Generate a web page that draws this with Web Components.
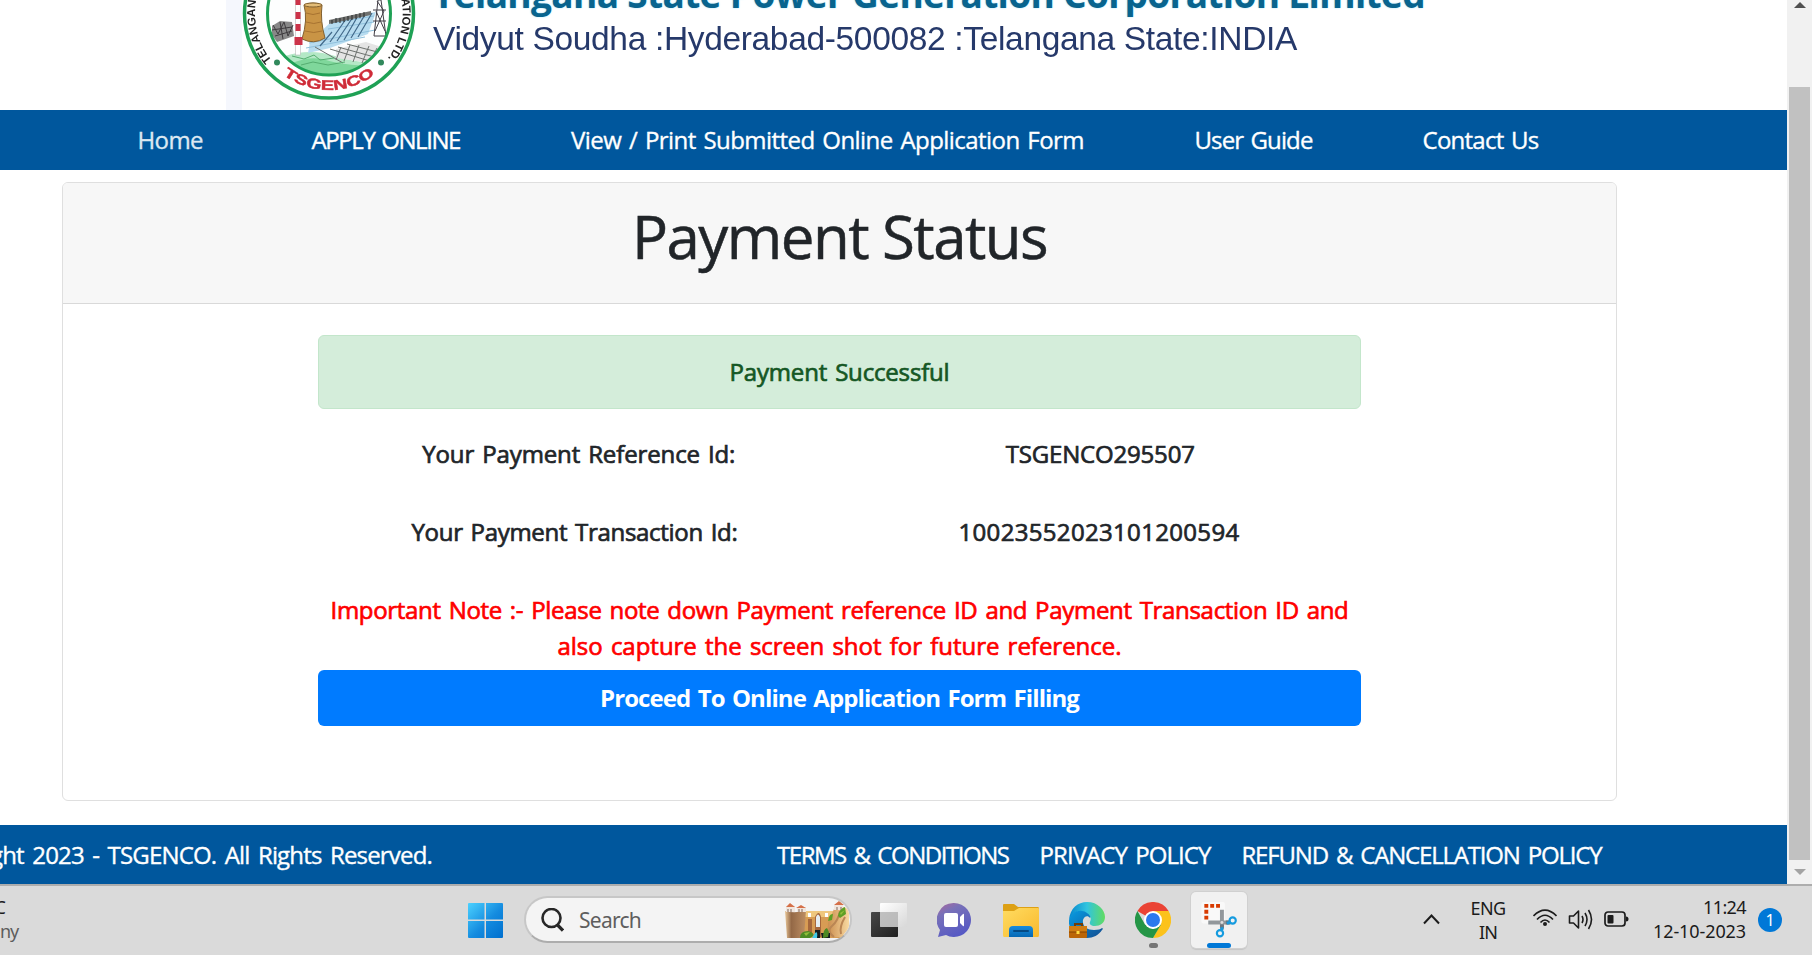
<!DOCTYPE html>
<html lang="en">
<head>
<meta charset="utf-8">
<title>Payment Status</title>
<style>
html,body{margin:0;height:955px;overflow:hidden;background:#fff}
body{font:24px/36px "Open Sans","Noto Sans",sans-serif;color:#212529}
</style>
</head>
<body>
<desk-screen>
  <site-page>
    <site-header></site-header>
    <site-nav></site-nav>
    <status-card></status-card>
    <site-footer></site-footer>
  </site-page>
  <page-scrollbar></page-scrollbar>
  <task-bar slot="bar"></task-bar>
</desk-screen>
<script>
const define=(name,html,after)=>customElements.define(name,class extends HTMLElement{
  constructor(){super();this.attachShadow({mode:'open'}).innerHTML=html;}
  connectedCallback(){if(after)after(this);}
});

/* One line of text tracked to a given width. */
define('fit-text',`<style>:host{display:block;white-space:nowrap;flex:none}span{display:inline-block;white-space:nowrap}</style><span><slot></slot></span>`,el=>{
  const w=+el.getAttribute('width'),s=el.shadowRoot.querySelector('span'),n=el.textContent.length;
  el.style.width=w+'px';
  const nat=s.getBoundingClientRect().width;
  s.style.letterSpacing=((w-nat)/n)+'px';
});

define('desk-screen',`<style>
:host{display:grid;grid-template-rows:884px 71px;width:1812px;height:955px;overflow:hidden}
.view{display:grid;grid-template-columns:1787px 25px;min-height:0}
</style><div class="view"><slot></slot></div><slot name="bar"></slot>`);

define('site-page',`<style>:host{display:flex;flex-direction:column;height:884px;overflow:hidden}</style><slot></slot>`);

define('tsgenco-seal',`<style>:host{display:block;width:180px;height:110px}svg{display:block;filter:blur(.35px)}</style>
<svg width="180" height="110" viewBox="239 0 180 110">
<defs><clipPath id="c"><circle cx="329" cy="13.500" r="61"/></clipPath></defs>
<circle cx="329" cy="13.500" r="84.500" fill="#fff" stroke="#1fa155" stroke-width="3.500"/>
<g clip-path="url(#c)">
<rect x="265" y="0" width="130" height="80" fill="#fdfefe"/>
<path d="M285 56Q310 48 335 56T380 62V80H285z" fill="#b4e8c6"/>
<path d="M290 64Q310 55 326 60T372 66V80H290z" fill="#7fd79b"/>
<path d="M272 26l8-5 12 1 2 14-17 6-5-7z" fill="#888"/>
<path d="M273 25l5 9 6-12 4 14 5-11M275 36l17-5M272 30l20-3M280 22l3 17" stroke="#3e3b3e" fill="none"/>
<path d="M310 42L334 19L376 12L368 34L330 48L308 53z" fill="#b7dcf0"/>
<path d="M309 43L375 30M306 48L365 37M333 23L374 16M328 29L374 22" stroke="#8fc0dc" fill="none"/>
<path d="M330 42l16-23M337 41l16-24M344 40l15-26M351 38l15-25M358 37l14-24M320 46l12-14" stroke="#42698a" stroke-width="1.200"/>
<path d="M329 20l42-9v4l-42 9z" fill="#70716f"/><path d="M332 20v4m4-6v5m4-5v5m4-6v5m4-6v5m4-6v5m4-6v5m4-6v5m4-6v5" stroke="#292c2d"/>
<path d="M304 5Q313 1 322 5Q320 21 325 38Q314 45 302 39Q308 20 304 5z" fill="#c99445" stroke="#80602f"/>
<ellipse cx="313" cy="5" rx="9" ry="2" fill="#e3bd78" stroke="#80602f"/>
<path d="M306 13q7 3 14 0M306 22q8 3 15 0M305 31q9 3 17 0" fill="none" stroke="#a77331"/>
<rect x="295.500" y="0" width="5" height="55" fill="#fff" stroke="#aaa" stroke-width=".5"/>
<path d="M295.500 0h5v5h-5zm0 12h5v7h-5zm0 12h5v7h-5zm-1 13h8v8h-8z" fill="#cc3349"/>
<path d="M336 49l30-7 22 7-11 15-41-6z" fill="#e4e4e4"/><path d="M330 49l43 13M338 47l40 11M347 44l38 10M336 60l5-13m3 14l6-16m3 17l6-17m3 18l7-17m1 16l7-14M315 47l28 16" stroke="#6c716e" fill="none"/>
<path d="M378 0l-4 36h12L381 0zm-5 10h13m-13 11h13M375 31l9-20m-8 0l9 20m-8-30l7 10" fill="none" stroke="#403d45"/>
<path d="M292 56l12 3 10-4 6 5 14-2M301 65l12-3 15 3 17-3" fill="none" stroke="#55ad70"/>
</g>
<circle cx="329" cy="13.500" r="61.500" fill="none" stroke="#1fa155" stroke-width="3"/>
<circle cx="277" cy="62.500" r="3" fill="#31895c"/><circle cx="381" cy="62.500" r="3" fill="#31895c"/>
<path id="low" fill="none" d="M252.500 13.500A76.500 76.500 0 0 0 405.500 13.500"/>
<path id="up" fill="none" d="M273 62A74 74 0 0 1 258 -7L259 -12"/>
<path id="dn" fill="none" d="M397.500 -14A74 74 0 0 1 374 72"/>
<g font-family="Liberation Sans,sans-serif" font-weight="700">
<text font-size="14" fill="#cf2c38" stroke="#cf2c38" stroke-width=".4" text-anchor="middle" textLength="98" lengthAdjust="spacingAndGlyphs"><textPath href="#low" startOffset="50%">TSGENCO</textPath></text>
<text font-size="11.500" fill="#222"><textPath href="#up" startOffset="2">TELANGANA</textPath></text>
<text font-size="11.500" fill="#222"><textPath href="#dn" startOffset="5">RATION LTD.</textPath></text>
</g></svg>`);

define('site-header',`<style>
:host{display:grid;grid-template-columns:226px 13px 180px 1fr;height:110px;overflow:hidden;flex:none}
.tint{width:16px;background:#f5f7fd}
.copy{padding-left:14px}
.name{margin-top:-31px;font:700 37px/50px "Open Sans",sans-serif;color:#08648e;text-shadow:0 0 2px #9de4f6}
.place{font:33.500px/40px "Liberation Sans",sans-serif;color:#26396a;filter:blur(.3px)}
tsgenco-seal{position:relative}
</style><span></span><div class="tint"></div><tsgenco-seal></tsgenco-seal>
<div class="copy"><fit-text class="name" width="992">Telangana State Power Generation Corporation Limited</fit-text><fit-text class="place" width="864">Vidyut Soudha :Hyderabad-500082 :Telangana State:INDIA</fit-text></div>`);

define('site-nav',`<style>:host{display:flex;height:60px;align-items:center;background:#00579d;color:#fff;flex:none;padding-left:137.500px;word-spacing:2px;-webkit-text-stroke:.35px currentColor}
.home{color:#dce8f2;margin-right:108.500px}.a{margin-right:111px}.v{margin-right:110.500px}.u{margin-right:110px}</style>
<fit-text class="home" width="65.5">Home</fit-text><fit-text class="a" width="148.500">APPLY ONLINE</fit-text><fit-text class="v" width="513">View / Print Submitted Online Application Form</fit-text><fit-text class="u" width="118">User Guide</fit-text><fit-text width="116">Contact Us</fit-text>`);

define('status-card',`<style>
:host{display:block;box-sizing:border-box;width:1555px;height:619px;margin:12px 0 24px 62px;border:1px solid #dfdfdf;border-radius:6px;flex:none;overflow:hidden}
header{display:flex;justify-content:center;height:120px;box-sizing:content-box;background:#f7f7f7;border-bottom:1px solid #d9d9d9}
.title{font-size:60px;line-height:72px;margin-top:17px;-webkit-text-stroke:.5px currentColor}
main{display:flex;flex-direction:column;width:1043px;margin:31px auto 0 255px;word-spacing:2px;-webkit-text-stroke:.7px currentColor}
.alert{box-sizing:border-box;height:74px;border:1px solid #c3e6cb;border-radius:6px;background:#d4edda;color:#155724;display:flex;align-items:center;justify-content:center}
.row{display:grid;grid-template-columns:521.5px 521.500px;justify-items:center;height:36px;margin-top:27px}
.row+.row{margin-top:42px;grid-template-columns:513px 529px}
.row+.row :last-child{margin-left:7px}
.note{display:flex;flex-direction:column;align-items:center;color:#f00;margin-top:42px}
button{all:unset;display:flex;justify-content:center;align-items:center;height:56px;margin-top:6px;border-radius:6px;background:#007bff;color:#fff;font-weight:700;-webkit-text-stroke:0;word-spacing:2px}
</style><header><fit-text class="title" width="415">Payment Status</fit-text></header>
<main><div class="alert"><fit-text width="220">Payment Successful</fit-text></div>
<div class="row"><fit-text width="313">Your Payment Reference Id:</fit-text><fit-text width="189">TSGENCO295507</fit-text></div>
<div class="row"><fit-text width="326">Your Payment Transaction Id:</fit-text><fit-text width="281">10023552023101200594</fit-text></div>
<div class="note"><fit-text width="1018">Important Note :- Please note down Payment reference ID and Payment Transaction ID and</fit-text><fit-text width="564">also capture the screen shot for future reference.</fit-text></div>
<button><fit-text width="479">Proceed To Online Application Form Filling</fit-text></button></main>`);

define('site-footer',`<style>:host{display:grid;grid-template-columns:432px 345px 1fr;align-items:center;height:59px;background:#00579d;color:#fff;flex:none;word-spacing:3px;-webkit-text-stroke:.35px currentColor}
.l{display:flex;justify-content:flex-end;overflow:hidden}.r{display:flex;gap:31px}</style>
<div class="l"><fit-text width="442">ght 2023 - TSGENCO. All Rights Reserved.</fit-text></div><span></span>
<div class="r"><fit-text width="231.500">TERMS &amp; CONDITIONS</fit-text><fit-text width="171">PRIVACY POLICY</fit-text><fit-text width="360">REFUND &amp; CANCELLATION POLICY</fit-text></div>`);

define('page-scrollbar',`<style>:host{display:flex;flex-direction:column;align-items:center;height:884px;background:#f1f1f1}
.up,.dn{width:0;height:0;border:6px solid transparent}
.up{margin-top:2px;border-top:0;border-bottom-color:#505050}.dn{border-bottom:0;border-top-color:#a3a3a3;margin-top:9px}
.thumb{width:21px;height:773px;margin:79px 2px 0;background:#c1c1c1}</style><div class="up"></div><div class="thumb"></div><div class="dn"></div>`);

define('search-box',`<style>:host{box-sizing:border-box;display:flex;align-items:center;width:328px;height:47px;border:2px solid #c7c7c7;border-bottom-color:#adadad;border-radius:24px;background:#f4f4f4;overflow:hidden;padding-left:15px;color:#5e5e5e;font:21px/30px "Noto Sans",sans-serif}
.pic{margin-left:auto}fit-text{margin-left:15px}</style>
<svg width="23" height="24" viewBox="0 0 23 24" fill="none" stroke="#272727" stroke-width="2.600"><circle cx="10.500" cy="10" r="9"/><path d="M16.500 17l5.500 5.500" stroke-width="3.200"/></svg>
<fit-text width="62">Search</fit-text>
<svg class="pic" width="66" height="38" viewBox="0 0 66 38">
<defs><linearGradient id="r"><stop stop-color="#e9c799"/><stop offset=".3" stop-color="#936846"/><stop offset="1" stop-color="#bd8e63"/></linearGradient><linearGradient id="s"><stop stop-color="#c98b4c"/><stop offset="1" stop-color="#f8d9a1"/></linearGradient></defs>
<path d="M19 10h40v27H19z" fill="#d79c54"/><path d="M20 10h38v6H20z" fill="#efc77d"/>
<path d="M1 10Q12 13 22 9L20 37H3z" fill="url(#r)"/>
<path d="M44 22L50 8Q61 3 65 10V27L58 36H43z" fill="url(#s)"/>
<path d="M56 10q-2 10-8 15t2 11M61 16q-6 10-4 17" fill="none" stroke="#ba8654" stroke-width="2"/>
<path d="M24 18h4v18h-4zm7-2q4-8 6 0v20h-6z" fill="#a5673c"/><path d="M32 16q2-5 4 0v10h-4z" fill="#e6edf1"/><path d="M24 12h3v4h-3zm17 0h3v4h-3z" fill="#fff"/>
<path d="M2 5h9v6H2zm11 1h9v5h-9zm37-2h9v5h-9z" fill="#f1e5dc"/><path d="M2 6l4-4 5 4zm10 1l5-3 5 3zm38-3l5-4 5 4z" fill="#d57049"/><path d="M4 8v3m3-3v3m8-3v3m3-3v3m35-5v3m4-3v3" stroke="#7e665b"/>
<path d="M31 29h5v8h-5zm6 3h9v5h-8z" fill="#151d20"/><path d="M31 32q3-3 2 5h-5z" fill="#42c9e7"/>
<path d="M16 37q0-7 8-7 7 2 5 5l-3 2zm23 0q0-9 4-10l2 4-1 5z" fill="#4d8a24"/><path d="M54 15q1-7 7-9l1 7-6 4zm-9 1q1-3 4-3l-1 6-4 1z" fill="#5d9f24"/><path d="M20 32l6-1-4 4zm36-20l5-3-4 5z" fill="#91bd38"/></svg>`);

define('task-bar',`<style>
:host{display:flex;box-sizing:border-box;height:71px;border-top:2px solid #adadad;background:#dadada;font:18px/24px "Noto Sans",sans-serif;color:#1b1b1b;overflow:hidden}
:host>*{flex:none}
.weather{width:468px;padding-top:9px;box-sizing:border-box}.weather div{width:18px;display:flex;justify-content:flex-end}.weather .deg{width:6px}.weather .cond{color:#5d5d5d}
.ic{display:block;margin-top:17px}
.tile{width:56px;height:56px;margin:6px 0 0 20px;border-radius:5px;background:#f1f1f1;box-shadow:0 0 0 1px #d0d0d0,0 2px 1px #c5c5c5;display:flex;flex-direction:column;align-items:center}
.tile i{display:block;width:24px;height:5px;border-radius:3px;background:#0078d7;margin-top:5px}
.chrome{width:36px;display:flex;flex-direction:column;align-items:center;margin-left:30px}.chrome svg{margin-top:16px}.chrome i{width:9px;height:5px;border-radius:3px;background:#757575;margin-top:5px}
.lang,.clock{display:flex;flex-direction:column}.lang{align-items:center;margin:10px 0 0 29px;width:38px}.clock{align-items:flex-end;width:94px;margin:9px 0 0 23px}
.badge{width:24px;height:24px;border-radius:50%;background:#0078d7;color:#fff;font-size:16px;text-align:center;margin:22px 0 0 12px}
</style>
<div class="weather"><div class="deg"><span>C</span></div><div class="cond"><fit-text width="18">ny</fit-text></div></div>
<svg class="ic" width="35" height="35" viewBox="0 0 35 35"><defs><linearGradient id="w" x2="1" y2="1"><stop stop-color="#4bd1ff"/><stop offset=".55" stop-color="#148bdf"/><stop offset="1" stop-color="#006fce"/></linearGradient></defs><path fill="url(#w)" d="M1 0h15.500v16.500H0V1q0-1 1-1zm17 0h16q1 0 1 1v15.500H18zM0 18h16.500v17H1q-1 0-1-1zm18 0h17v16q0 1-1 1H18z"/></svg>
<search-box style="margin:10px 0 0 21px"></search-box>
<svg class="ic" style="margin-left:19px" width="36" height="35" viewBox="0 0 36 35"><defs><linearGradient id="k" x2="1" y2="1"><stop stop-color="#474747"/><stop offset="1" stop-color="#202020"/></linearGradient><linearGradient id="q" x2="1" y2="1"><stop stop-color="#fff"/><stop offset="1" stop-color="#d8d8d8"/></linearGradient></defs><rect y="9" width="27" height="25" rx="1" fill="url(#k)"/><rect x="9" width="27" height="24" rx="1" fill="url(#q)"/><path d="M9 9h18v15H9z" fill="#aaa" opacity=".7"/></svg>
<svg class="ic" style="margin-left:30px" width="35" height="35" viewBox="0 0 35 35"><defs><linearGradient id="t" x1=".2" x2=".7" y2="1"><stop stop-color="#a16aa3"/><stop offset=".25" stop-color="#7870b8"/><stop offset="1" stop-color="#5357c5"/></linearGradient></defs><path d="M17 0A17 17 0 1 1 9 32L1 34 3 27A17 17 0 0 1 17 0z" fill="url(#t)"/><rect x="7" y="10" width="14" height="14" rx="2" fill="#fff"/><path d="M23 14l3-3q1-1 1 1v10q0 2-1 1l-3-3z" fill="#fff"/></svg>
<svg class="ic" style="margin-left:31px" width="36" height="35" viewBox="0 0 36 35"><defs><linearGradient id="f" x2="1" y2="1"><stop stop-color="#ffdc61"/><stop offset="1" stop-color="#f9b92d"/></linearGradient><linearGradient id="fb" x2="0" y2="1"><stop stop-color="#168bdd"/><stop offset="1" stop-color="#0568b4"/></linearGradient></defs><path d="M0 2q0-1 1-1h10l4 3h20q1 0 1 2v7H0z" fill="#dda014"/><path d="M0 8h11l5-3h19q1 0 1 1v26q0 2-1 2H1q-1 0-1-2z" fill="url(#f)"/><path d="M6 34v-7q0-4 4-4h16q4 0 4 4v7z" fill="url(#fb)"/><path d="M11 28h14" stroke="#044a84" stroke-width="2" stroke-linecap="round"/></svg>
<svg class="ic" style="margin:16px 0 0 30px" width="36" height="37" viewBox="0 0 36 37"><defs><linearGradient id="e"><stop stop-color="#0686ce"/><stop offset=".5" stop-color="#31c4df"/><stop offset="1" stop-color="#61dc61"/></linearGradient><linearGradient id="e2" x2="1" y2="1"><stop stop-color="#079ce2"/><stop offset="1" stop-color="#134d91"/></linearGradient></defs>
<path d="M0 18C1 6 9 0 18 0c11 0 18 8 18 15 0 6-5 9-10 9-4 0-6-2-5-4 2-4 0-7-4-9C11 7 4 10 0 18z" fill="url(#e)"/><path d="M0 18C3 8 13 7 18 11c3 2 4 4 3 5-2-3-6-2-7 2-1 6 4 10 11 10 4 0 7-1 8-2 1 0 1 1 0 2-3 5-9 8-15 8C7 36-1 29 0 18z" fill="url(#e2)"/><path d="M6 24v-2h7v2" fill="none" stroke="#713d07" stroke-width="2"/><rect y="24" width="18" height="12" rx="1" fill="#bb6507"/><path d="M0 24h18v6H0z" fill="#d07c12"/><path d="M0 30h18" stroke="#834202"/><rect x="7.500" y="29" width="3" height="3" fill="#ffda40"/></svg>
<div class="chrome"><svg width="36" height="36" viewBox="0 0 36 36"><path d="M18 18L2.400 9A18 18 0 0 1 33.600 9z" fill="#ea4335"/><path d="M18 9h15.600A18 18 0 0 1 18 36l8-14z" fill="#fcc21b"/><path d="M2.400 9A18 18 0 0 0 18 36l8-13.500-8 4.500-8-4.500z" fill="#249546"/><circle cx="18" cy="18" r="9" fill="#fff"/><circle cx="18" cy="18" r="7" fill="#2b79ed"/></svg><i></i></div>
<div class="tile"><svg style="margin-top:9px" width="38" height="38" viewBox="0 0 38 38"><rect x="1" y="1" width="24" height="22" rx="2" fill="#fff" opacity=".6"/><path d="M6 20V5h16" fill="none" stroke="#d83b01" stroke-width="4" stroke-dasharray="4 2" stroke-dashoffset="-1"/><path d="M22 9v20M8 22h23" stroke="#92979b" stroke-width="4"/><path d="M22 24v4M26 22h4" stroke="#6c777f" stroke-width="4"/><circle cx="33" cy="20" r="3.200" fill="none" stroke="#159bdf" stroke-width="2.200"/><circle cx="20" cy="33" r="3.200" fill="none" stroke="#159bdf" stroke-width="2.200"/><path d="M30 22l-3 1M22 30v-3" stroke="#159bdf" stroke-width="3"/><circle cx="22" cy="22" r="1.500" fill="#ddd"/></svg><i></i></div>
<svg style="margin:28px 0 0 176px" width="17" height="11" viewBox="0 0 17 11"><path d="M1 9.500l7.500-8 7.500 8" fill="none" stroke="#1c1c1c" stroke-width="2"/></svg>
<div class="lang"><fit-text width="35">ENG</fit-text><fit-text width="18">IN</fit-text></div>
<svg style="margin:22px 0 0 26px" width="24" height="20" viewBox="0 0 24 20" fill="none" stroke="#1c1c1c" stroke-width="1.700"><path d="M.5 8Q12-3.500 23.500 8M4 11.500Q12 3 20 11.500M7.500 14.500Q12 9.500 16.500 14.500"/><circle cx="12" cy="16" r="2" fill="#1c1c1c" stroke="none"/></svg>
<svg style="margin:23px 0 0 11px" width="26" height="22" viewBox="0 0 26 22" fill="none" stroke="#1c1c1c" stroke-width="1.600" stroke-linejoin="round"><path d="M1.500 7h4l5-5v17l-5-5h-4zM14 7q2 3.500 0 7M17 4q4 6.500 0 13M20.500 1q6 9.500 0 19"/></svg>
<svg style="margin:25px 0 0 10px" width="25" height="17" viewBox="0 0 25 17"><rect x="1" y="1" width="20" height="14" rx="3" fill="none" stroke="#1c1c1c" stroke-width="1.700"/><rect x="3.500" y="4" width="6" height="8.500" rx="1" fill="#1c1c1c"/><path d="M22 5.500q2.500 0 2.500 2.500T22 10.500z" fill="#1c1c1c"/></svg>
<div class="clock"><fit-text width="43">11:24</fit-text><fit-text width="93">12-10-2023</fit-text></div><div class="badge">1</div>`);
</script>
</body>
</html>
